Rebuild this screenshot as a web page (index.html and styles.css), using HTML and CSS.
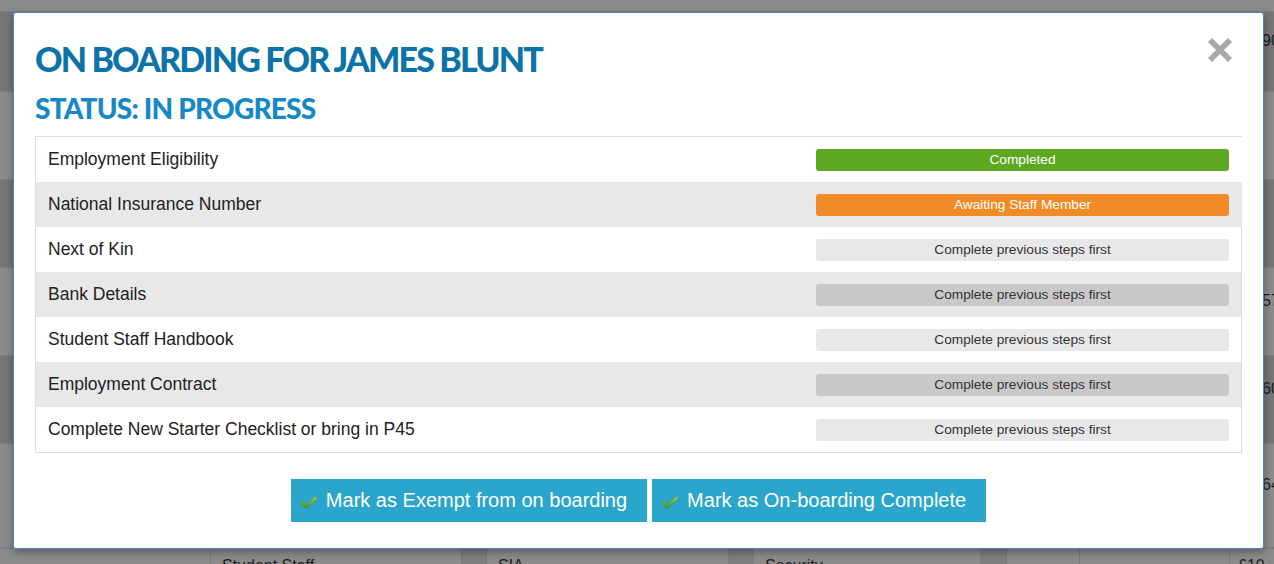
FILE: index.html
```html
<!DOCTYPE html>
<html>
<head>
<meta charset="utf-8">
<link rel="stylesheet" href="styles.css">
</head>
<body>
<div class="bg">
  <div class="bg-row light h12"><span class="bg-num"></span></div>
  <div class="bg-row dark h80"><span class="bg-num">90</span></div>
  <div class="bg-row light h88"><span class="bg-num"></span></div>
  <div class="bg-row dark h88"><span class="bg-num"></span></div>
  <div class="bg-row light h88"><span class="bg-num">57</span></div>
  <div class="bg-row dark h88"><span class="bg-num">60</span></div>
  <div class="bg-row light h104"><span class="bg-num">64</span></div>
  <div class="bg-row cells">
    <span class="c c0"></span>
    <span class="c c1">Student Staff</span>
    <span class="c c2"></span>
    <span class="c c3">SIA</span>
    <span class="c c4"></span>
    <span class="c c5">Security</span>
    <span class="c c6"></span>
    <span class="c c7"></span>
    <span class="c c8"></span>
    <span class="c c9">£10</span>
  </div>
</div>

<div class="modal">
  <button class="close" aria-label="Close">
    <svg width="26" height="26" viewBox="0 0 26 26"><path d="M1 5 L5 1 L13 9 L21 1 L25 5 L17 13 L25 21 L21 25 L13 17 L5 25 L1 21 L9 13 Z" fill="#a8a8a8"/></svg>
  </button>
  <h1 class="title">ON BOARDING FOR JAMES BLUNT</h1>
  <h2 class="status">STATUS: IN PROGRESS</h2>
  <div class="steps">
    <div class="step"><span class="label">Employment Eligibility</span><span class="pill done">Completed</span></div>
    <div class="step alt"><span class="label">National Insurance Number</span><span class="pill waiting">Awaiting Staff Member</span></div>
    <div class="step edge"><span class="label">Next of Kin</span><span class="pill locked">Complete previous steps first</span></div>
    <div class="step alt edge"><span class="label">Bank Details</span><span class="pill locked">Complete previous steps first</span></div>
    <div class="step edge"><span class="label">Student Staff Handbook</span><span class="pill locked">Complete previous steps first</span></div>
    <div class="step alt edge"><span class="label">Employment Contract</span><span class="pill locked">Complete previous steps first</span></div>
    <div class="step edge"><span class="label">Complete New Starter Checklist or bring in P45</span><span class="pill locked">Complete previous steps first</span></div>
  </div>
  <div class="actions">
    <button class="btn"><svg class="tick" width="18" height="13" viewBox="0 0 18 13"><defs><linearGradient id="g" x1="0" y1="0" x2="0" y2="1"><stop offset="0" stop-color="#9cd46a"/><stop offset="1" stop-color="#3a8a25"/></linearGradient></defs><path d="M0.3 7.2 L3 5 L6.2 8.4 L15.2 0.3 L17.7 2.6 L6.2 12.8 Z" fill="url(#g)" stroke="#4f9632" stroke-width="0.6"/></svg>Mark as Exempt from on boarding</button>
    <button class="btn"><svg class="tick" width="18" height="13" viewBox="0 0 18 13"><path d="M0.3 7.2 L3 5 L6.2 8.4 L15.2 0.3 L17.7 2.6 L6.2 12.8 Z" fill="url(#g)" stroke="#4f9632" stroke-width="0.6"/></svg>Mark as On-boarding Complete</button>
  </div>
</div>
</body>
</html>
```
FILE: styles.css
```css
html, body {
  margin: 0;
  padding: 0;
  width: 1274px;
  height: 564px;
  overflow: hidden;
  font-family: "Liberation Sans", Arial, sans-serif;
  background: #8a8a8a;
}

.bg {
  display: flex;
  flex-direction: column;
  width: 1274px;
  height: 564px;
}
.bg-row {
  display: flex;
  justify-content: flex-end;
  align-items: center;
  border-bottom: 1px solid #7f7f7f;
  box-sizing: border-box;
  flex: none;
}
.light { background: #8b8b8b; }
.dark { background: #767676; }
.h12 { height: 12px; }
.h80 { height: 80px; }
.h88 { height: 88px; }
.h104 { height: 104px; }
.bg-num {
  width: 12px;
  overflow: hidden;
  font-size: 16px;
  color: #1e1e1e;
  white-space: nowrap;
  margin-bottom: 22px;
}
.cells {
  height: 16px;
  background: #8b8b8b;
  align-items: flex-start;
  justify-content: flex-start;
  border-top: 1px solid #7a7a7a;
  border-bottom: 0;
}
.c {
  height: 16px;
  box-sizing: border-box;
  border-right: 1px solid #7a7a7a;
  font-size: 16px;
  line-height: 18px;
  color: #1e1e1e;
  padding: 8px 0 0 11px;
  white-space: nowrap;
  overflow: hidden;
}
.c0 { width: 211px; padding: 0; }
.c1 { width: 251px; }
.c2 { width: 25px; background: #7e7e7e; padding: 0; }
.c3 { width: 242px; }
.c4 { width: 25px; background: #7e7e7e; padding: 0; }
.c5 { width: 227px; }
.c6 { width: 26px; background: #7e7e7e; padding: 0; }
.c7 { width: 73px; padding: 0; }
.c8 { width: 150px; padding: 0; }
.c9 { flex: 1; padding-left: 8px; border-right: 0; }

.modal {
  position: absolute;
  left: 13px;
  top: 12px;
  width: 1251px;
  height: 537px;
  box-sizing: border-box;
  background: #fff;
  border: 1px solid #4f82cc;
  border-radius: 3px;
  box-shadow: 0 3px 8px rgba(0,0,0,0.35);
  padding: 26px 21px 0 21px;
}

.close {
  position: absolute;
  top: 24px;
  right: 30px;
  padding: 0;
  border: 0;
  background: transparent;
  width: 26px;
  height: 26px;
  line-height: 0;
}

.title {
  margin: 0;
  font-family: Lato, "Noto Sans", sans-serif;
  font-weight: 900;
  font-size: 34px;
  line-height: 40px;
  color: #0b73a8;
  letter-spacing: -1.85px;
}
.status {
  margin: 13px 0 0 0;
  font-family: Lato, "Noto Sans", sans-serif;
  font-weight: 900;
  font-size: 28px;
  line-height: 32px;
  color: #1688c6;
  letter-spacing: -0.8px;
}

.steps {
  margin-top: 12px;
  border-top: 1px solid #dddddd;
  border-bottom: 1px solid #dddddd;
  border-left: 1px solid #dddddd;
}
.step {
  display: flex;
  align-items: center;
  height: 45px;
  box-sizing: border-box;
  padding: 0 12px;
  background: #fff;
  border-right: 1px solid transparent;
}
.step.edge {
  border-right-color: #dddddd;
}
.step.alt { background: #e8e8e8; }
.label {
  flex: 1;
  font-size: 17.5px;
  color: #222;
}
.pill {
  width: 413px;
  height: 22px;
  line-height: 22px;
  border-radius: 3px;
  text-align: center;
  font-size: 13.7px;
  color: #333;
}
.pill.done { background: #5ea722; color: #fff; }
.pill.waiting { background: #f08b27; color: #fff; }
.pill.locked { background: #e8e8e8; }
.alt .pill.locked { background: #c9c9c9; }

.actions {
  display: flex;
  justify-content: center;
  gap: 5px;
  margin-top: 26px;
}
.btn {
  display: flex;
  align-items: center;
  height: 43px;
  padding: 0 20px 0 9px;
  border: 0;
  border-radius: 0;
  background: #2aa6cc;
  color: #fff;
  font-family: "Liberation Sans", Arial, sans-serif;
  font-size: 20px;
}
.tick {
  margin-right: 8px;
  margin-top: 4px;
}
```
